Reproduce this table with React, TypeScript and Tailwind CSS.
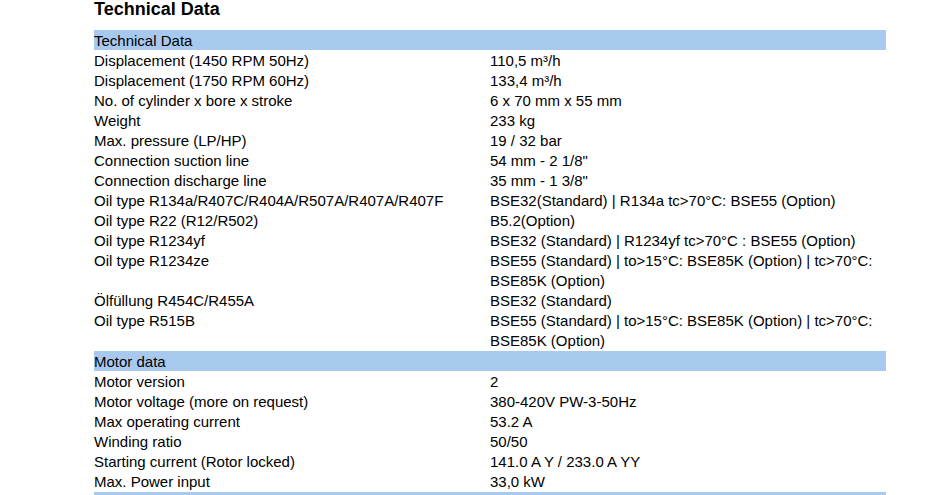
import React from 'react';

type Row = { label: string; value: React.ReactNode };

const TECH: Row[] = [
  { label: 'Displacement (1450 RPM 50Hz)', value: '110,5 m³/h' },
  { label: 'Displacement (1750 RPM 60Hz)', value: '133,4 m³/h' },
  { label: 'No. of cylinder x bore x stroke', value: '6 x 70 mm x 55 mm' },
  { label: 'Weight', value: '233 kg' },
  { label: 'Max. pressure (LP/HP)', value: '19 / 32 bar' },
  { label: 'Connection suction line', value: '54 mm - 2 1/8"' },
  { label: 'Connection discharge line', value: '35 mm - 1 3/8"' },
  { label: 'Oil type R134a/R407C/R404A/R507A/R407A/R407F', value: 'BSE32(Standard) | R134a tc>70°C: BSE55 (Option)' },
  { label: 'Oil type R22 (R12/R502)', value: 'B5.2(Option)' },
  { label: 'Oil type R1234yf', value: 'BSE32 (Standard) | R1234yf tc>70°C : BSE55 (Option)' },
  { label: 'Oil type R1234ze', value: 'BSE55 (Standard) | to>15°C: BSE85K (Option) | tc>70°C: BSE85K (Option)' },
  { label: 'Ölfüllung R454C/R455A', value: 'BSE32 (Standard)' },
  { label: 'Oil type R515B', value: 'BSE55 (Standard) | to>15°C: BSE85K (Option) | tc>70°C: BSE85K (Option)' },
];

const MOTOR: Row[] = [
  { label: 'Motor version', value: '2' },
  { label: 'Motor voltage (more on request)', value: '380-420V PW-3-50Hz' },
  { label: 'Max operating current', value: '53.2 A' },
  { label: 'Winding ratio', value: '50/50' },
  { label: 'Starting current (Rotor locked)', value: '141.0 A Y / 233.0 A YY' },
  { label: 'Max. Power input', value: '33,0 kW' },
];

const SectionHeader = ({ title, first }: { title: string; first?: boolean }) => (
  <div className={`h-[20px] bg-[#a8c9ee] leading-[20px] ${first ? '' : 'mt-px'}`}>
    <div className="pt-px">{title}</div>
  </div>
);

const DataRows = ({ rows }: { rows: Row[] }) => (
  <div className="grid grid-cols-2">
    {rows.map((r) => (
      <React.Fragment key={r.label}>
        <div className="pt-px -mb-px pr-2">{r.label}</div>
        <div className="pt-px -mb-px">{r.value}</div>
      </React.Fragment>
    ))}
  </div>
);

export default function App() {
  return (
    <div className="min-h-[495px] bg-white text-black font-['Liberation_Sans',Arial,sans-serif] overflow-hidden">
      <div className="ml-[94px] w-[792px]">
        <h1 className="h-[30px] text-[18px] font-bold leading-[19px]">Technical Data</h1>
        <div className="text-[15px] leading-[20px]">
          <SectionHeader title="Technical Data" first />
          <DataRows rows={TECH} />
          <SectionHeader title="Motor data" />
          <DataRows rows={MOTOR} />
          <SectionHeader title="" />
        </div>
      </div>
    </div>
  );
}
